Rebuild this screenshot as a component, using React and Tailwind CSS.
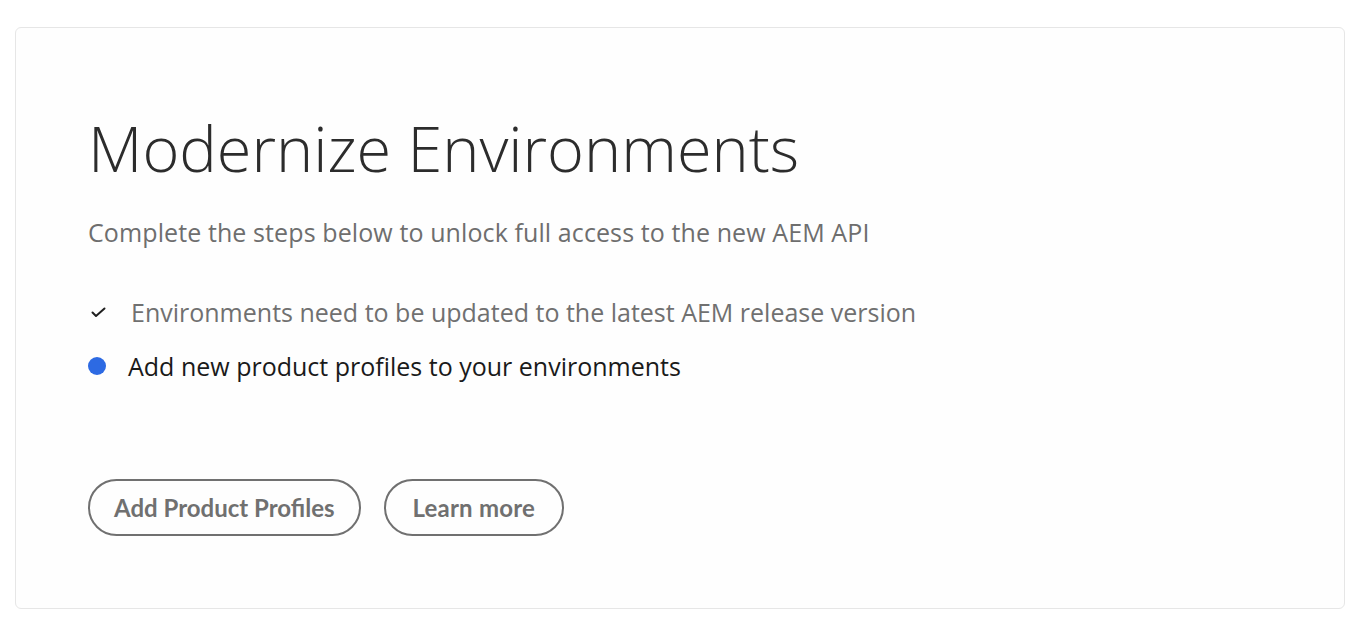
import React from "react";

const openSans = { fontFamily: "'Open Sans', 'Noto Sans', sans-serif" };
const lato = { fontFamily: "Lato, 'Open Sans', sans-serif" };

function CheckIcon() {
    return (
        <svg width="15" height="11" viewBox="0 0 15 11" fill="none">
            <path d="M1.5 5.5 L5 9 L13.5 1.5" stroke="#1f1f1f" strokeWidth="2" strokeLinecap="round" strokeLinejoin="round" />
        </svg>
    );
}

const App = () => {
    return (
        <div className="w-full h-[624px] bg-white pt-[27px] pl-[15px]" style={openSans}>
            <div className="w-[1330px] h-[582px] rounded-[6px] border border-[#e6e6e6] bg-[#fefefe] pl-[72px] pt-[88px]">
                <h1 className="text-[63px] leading-[63px] font-light text-[#2c2c2c]">
                    Modernize Environments
                </h1>

                <p className="mt-[38px] text-[25px] leading-[30px] text-[#6e6e6e] tracking-[0.1px]">
                    Complete the steps below to unlock full access to the new AEM API
                </p>

                <ul className="mt-[50px] flex flex-col gap-[24px]">
                    <li className="flex items-center h-[30px]">
                        <span className="w-[43px] pl-[3px] flex items-center"><CheckIcon /></span>
                        <span className="text-[25px] leading-[30px] text-[#707070]">Environments need to be updated to the latest AEM release version</span>
                    </li>
                    <li className="flex items-center h-[30px]">
                        <span className="w-[40px] flex items-center">
                            <span className="block w-[18px] h-[18px] rounded-full bg-[#2d6ae3]" />
                        </span>
                        <span className="text-[25px] leading-[30px] text-[#1a1a1a]">Add new product profiles to your environments</span>
                    </li>
                </ul>

                <div className="mt-[98px] flex gap-[23px]" style={lato}>
                    <button className="h-[57px] px-[24px] rounded-full border-[2.5px] border-[#707070] text-[24px] font-bold text-[#707070]">
                        Add Product Profiles
                    </button>
                    <button className="h-[57px] px-[27px] rounded-full border-[2.5px] border-[#707070] text-[24px] font-bold text-[#707070] tracking-[0.2px]">
                        Learn more
                    </button>
                </div>
            </div>
        </div>
    );
};

export default App;
